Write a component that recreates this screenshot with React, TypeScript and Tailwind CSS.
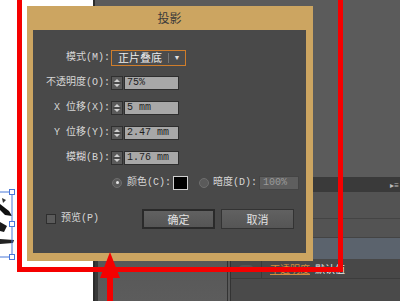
const label = "font-['Liberation_Mono','Noto_Sans_CJK_SC',monospace] text-[10px] leading-none text-[#d6d6d6]";

function Spinner() {
  return (
    <svg width="12" height="14" viewBox="0 0 12 14" className="shrink-0">
      <rect x="0.5" y="0.5" width="11" height="13" fill="#5a5a5a" stroke="#2f2f2f" />
      <path d="M3 6 L6 3 L9 6 Z" fill="#cfcfcf" />
      <path d="M3 8 L6 11 L9 8 Z" fill="#cfcfcf" />
      <line x1="2" y1="7" x2="10" y2="7" stroke="#3a3a3a" />
    </svg>
  );
}

function NumField({ value }: { value: string }) {
  return (
    <div className="flex items-center">
      <Spinner />
      <div className="ml-px flex h-[14px] w-[55px] items-center border border-[#2e2e2e] bg-[#a8a8a8] pl-[2px] font-['Liberation_Mono',monospace] text-[10px] leading-none text-[#1e1e1e]">
        {value}
      </div>
    </div>
  );
}

function Row({ name, children }: { name: string; children: React.ReactNode }) {
  return (
    <div className="flex h-[25px] items-center">
      <span className={`w-[77px] text-right ${label}`}>{name}</span>
      <div className="ml-px">{children}</div>
    </div>
  );
}

function Radio({ on }: { on?: boolean }) {
  return (
    <span className="flex h-[10px] w-[10px] shrink-0 items-center justify-center rounded-full border border-[#6e6e6e] bg-[#5a5a5a]">
      {on && <span className="h-[3px] w-[3px] rounded-full bg-[#e6e6e6]" />}
    </span>
  );
}

function Dialog() {
  return (
    <div className="absolute left-[27px] top-[6px] flex h-[255px] w-[286px] flex-col bg-[#cca561] pb-[8px] pl-[6px] pr-[7px]">
      <div className="flex h-[24px] shrink-0 items-center justify-center font-['Noto_Sans_CJK_SC',sans-serif] text-[12px] text-[#3a3a3a]">
        投影
      </div>
      <div className="flex flex-1 flex-col bg-[#494949] pt-[15px]">
        <Row name="模式(M):">
          <div className="flex h-[16px] w-[75px] items-center border border-[#cf7d2b] bg-[#4c4c4c] pl-[6px]">
            <span className="font-['Noto_Sans_CJK_SC',sans-serif] text-[11px] leading-none text-[#ececec]">正片叠底</span>
            <span className="ml-auto h-[10px] w-px bg-[#777]" />
            <span className="flex w-[16px] justify-center text-[7px] leading-none text-[#e0e0e0]">▼</span>
          </div>
        </Row>
        <Row name="不透明度(O):">
          <NumField value="75%" />
        </Row>
        <Row name="X 位移(X):">
          <NumField value="5 mm" />
        </Row>
        <Row name="Y 位移(Y):">
          <NumField value="2.47 mm" />
        </Row>
        <Row name="模糊(B):">
          <NumField value="1.76 mm" />
        </Row>
        <div className="flex h-[25px] items-center pl-[79px]">
          <Radio on />
          <span className={`ml-[5px] ${label}`}>颜色(C):</span>
          <span className="ml-[2px] h-[14px] w-[15px] border border-[#d0d0d0] bg-black" />
          <span className="ml-[11px]">
            <Radio />
          </span>
          <span className={`ml-[4px] ${label}`}>暗度(D):</span>
          <span className="ml-[2px] flex h-[14px] w-[40px] items-center border border-[#444] bg-[#5e5e5e] pl-[3px] font-['Liberation_Mono',monospace] text-[10px] leading-none text-[#9a9a9a]">
            100%
          </span>
        </div>
        <div className="mt-[14px] flex h-[20px] items-center pl-[13px] pr-[12px]">
          <span className="h-[10px] w-[10px] border border-[#2e2e2e] bg-[#5b5b5b]" />
          <span className={`ml-[5px] ${label}`}>预览(P)</span>
          <div className="ml-auto flex gap-[6px]">
            <button className="flex h-[20px] w-[73px] items-center justify-center border-2 border-[#2a2a2a] bg-gradient-to-b from-[#616161] to-[#555] font-['Noto_Sans_CJK_SC',sans-serif] text-[11px] text-[#e2e2e2]">
              确定
            </button>
            <button className="flex h-[20px] w-[73px] items-center justify-center border border-[#333] bg-gradient-to-b from-[#616161] to-[#555] font-['Noto_Sans_CJK_SC',sans-serif] text-[11px] text-[#e2e2e2]">
              取消
            </button>
          </div>
        </div>
      </div>
    </div>
  );
}

function Canvas() {
  return (
    <div className="relative h-full w-[95px] shrink-0 border-r-2 border-[#2c2c2c] bg-white">
      <svg width="95" height="301" className="absolute left-0 top-0">
        <path d="M0 204 L9 211 L12 216 L5 215 L0 210 Z" fill="#111" />
        <path d="M0 222 L7 226 L4 232 L0 231 Z" fill="#1a1a1a" />
        <path d="M0 239 L14 240 L13 243 L0 244 Z" fill="#222" />
        <path d="M2 198 L6 200 L3 203 Z" fill="#333" />
        <polyline points="0,192 12,192 12,257 0,257" fill="none" stroke="#4a78d8" strokeWidth="1" />
        <rect x="9.5" y="189.5" width="5" height="5" fill="#fff" stroke="#4a78d8" />
        <rect x="9.5" y="221.5" width="5" height="5" fill="#fff" stroke="#4a78d8" />
        <rect x="9.5" y="254.5" width="5" height="5" fill="#fff" stroke="#4a78d8" />
      </svg>
    </div>
  );
}

function Panel() {
  return (
    <div className="flex flex-1 flex-col border-l-[3px] border-[#383838] bg-[#4b4b4b]">
      <div className="flex h-[15px] shrink-0 items-center justify-end bg-[#3a3a3a] pr-[1px] text-[8px] leading-none text-[#bdbdbd]">
        ▸≡
      </div>
      <div className="flex flex-1">
        <div className="w-[133px] shrink-0 border-r-4 border-double border-[#333] bg-gradient-to-b from-[#505050] to-[#5c5c5c]" />
        <div className="flex flex-1 flex-col">
          <div className="h-[27px] border-b border-[#444] bg-[#535353]" />
          <div className="h-[19px] border-b border-[#444] bg-[#535353]" />
          <div className="h-[21px] bg-[#5b636d]" />
          <div className="flex h-[20px] border-b border-[#3c3c3c] bg-[#484848]">
            <div className="flex w-[31px] items-center justify-center border-r border-[#3a3a3a]">
              <span className="h-[7px] w-[14px] rounded-full bg-[#555]" />
            </div>
            <div className="flex items-center pl-[8px] font-['Noto_Sans_CJK_SC',sans-serif] text-[10px] leading-none">
              <span className="text-[#d38b3c] underline">不透明度</span>
              <span className="ml-[5px] text-[#e8e8e8]">默认值</span>
            </div>
          </div>
          <div className="flex-1 bg-[#4a4a4a]" />
        </div>
      </div>
    </div>
  );
}

export default function App() {
  return (
    <div className="relative flex h-[301px] w-[400px] overflow-hidden bg-[#5b5b5b]">
      <Canvas />
      <div className="flex flex-1 flex-col">
        <div className="h-[177px] shrink-0" />
        <Panel />
      </div>
      <Dialog />
      <div className="absolute left-[17px] top-[-10px] h-[282px] w-[326px] border-[5px] border-[#f50000]" />
      <svg width="22" height="51" viewBox="0 0 22 51" className="absolute left-[99px] top-[251px]">
        <path d="M11 1 L1 27 L21 27 Z" fill="#f50000" />
        <rect x="8" y="20" width="6" height="31" fill="#f50000" />
      </svg>
    </div>
  );
}
